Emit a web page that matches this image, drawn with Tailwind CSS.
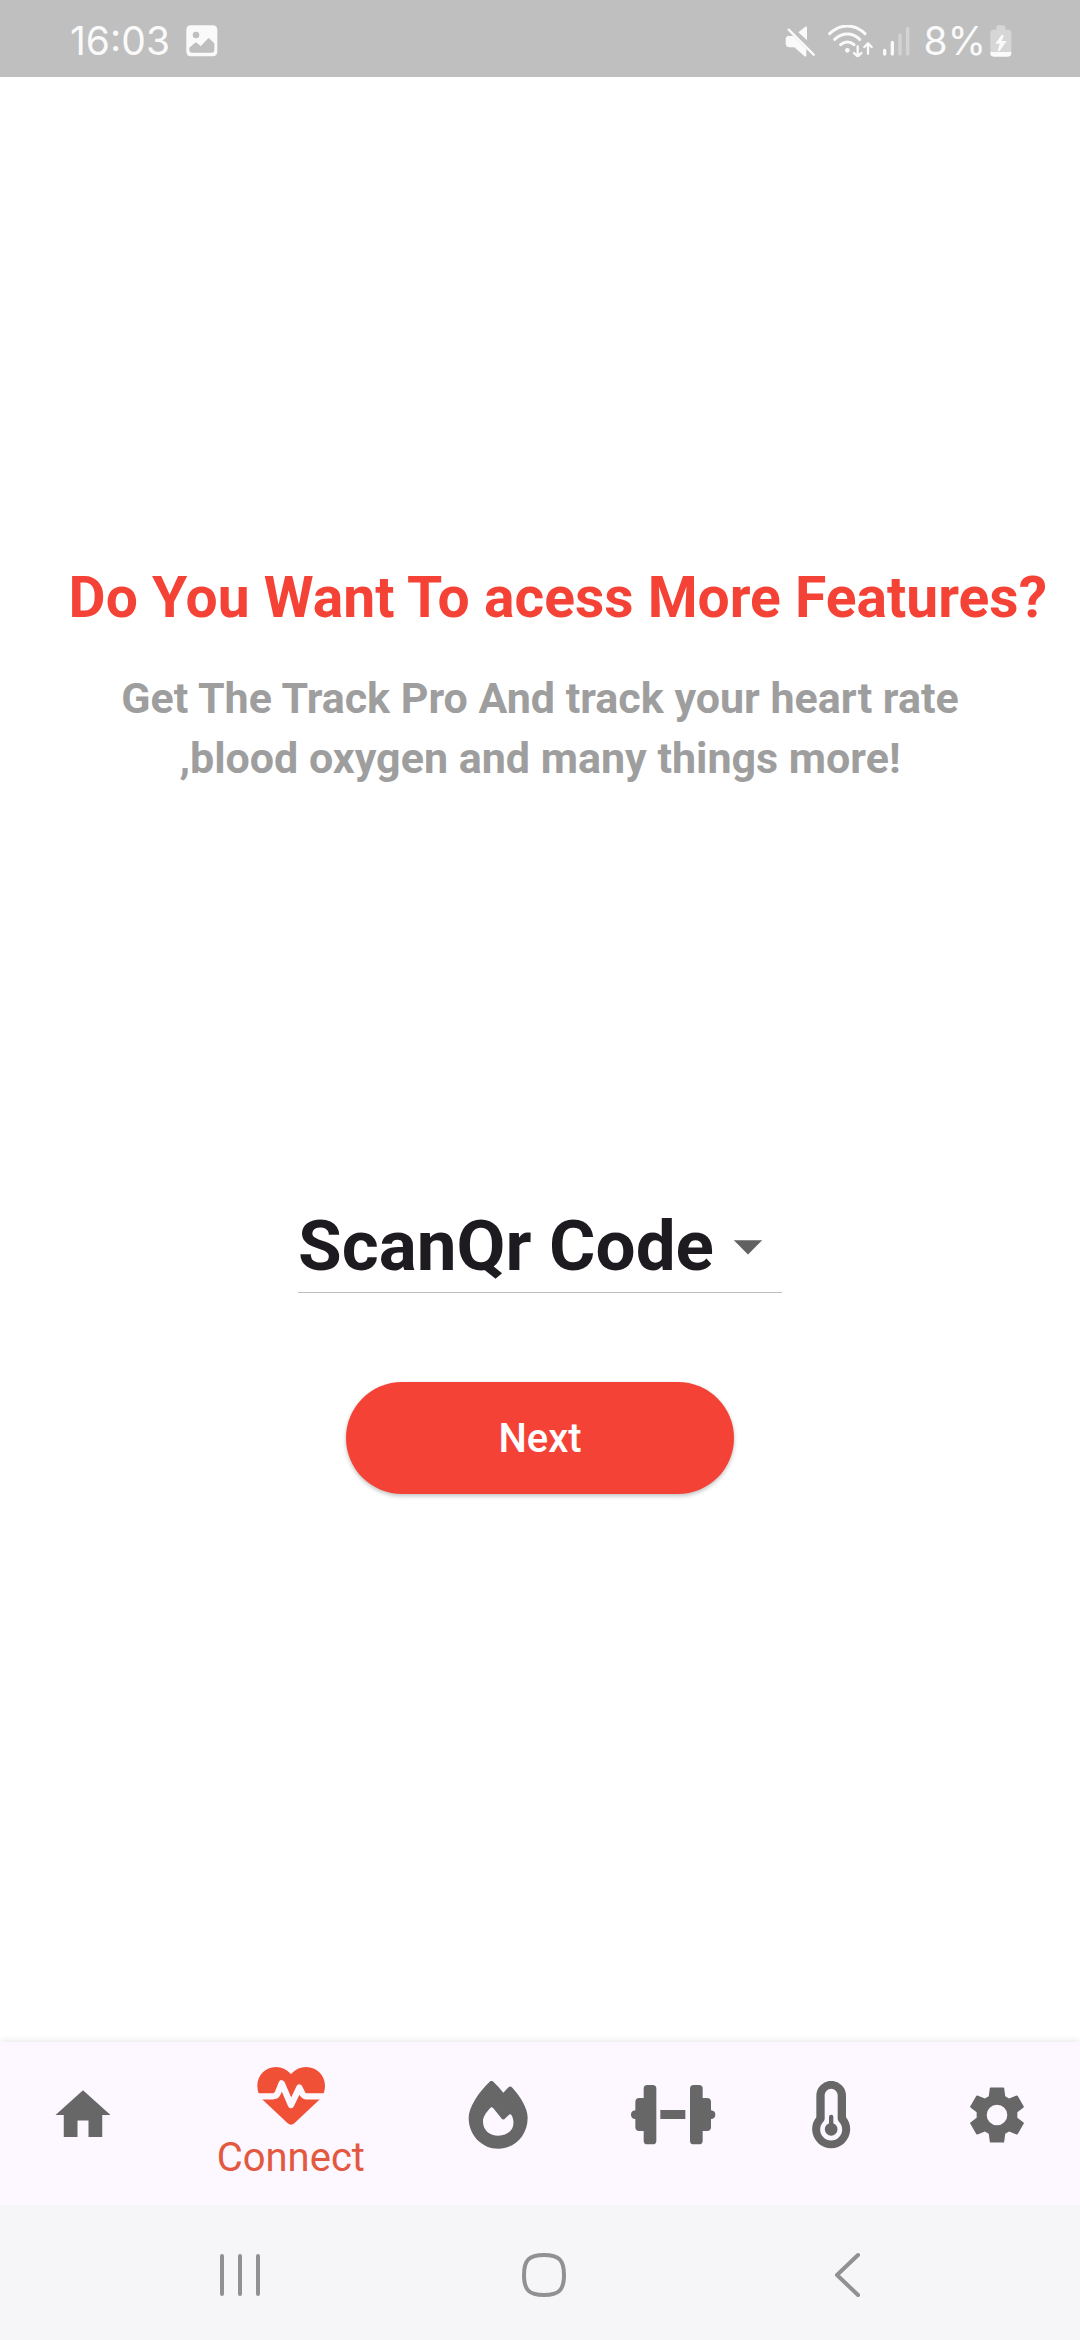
<!DOCTYPE html>
<html lang="en">
<head>
<meta charset="utf-8">
<meta name="viewport" content="width=device-width, initial-scale=1">
<title>Connect</title>
<script src="https://cdn.jsdelivr.net/npm/@tailwindcss/browser@4"></script>
</head>
<body class="flex min-h-screen flex-col bg-white font-['Roboto',sans-serif]">

<header class="flex h-[77px] items-center justify-between bg-[#bfbfbf] pt-1 pr-[68px] pl-[70px] font-['Inter',sans-serif] text-[39px] leading-[48px] text-[#fafafa]">
  <div class="flex items-center gap-4">
    <span>16:03</span>
    <svg class="h-8 w-8" viewBox="0 0 96 96" aria-hidden="true">
      <path fill="currentColor" fill-rule="evenodd" d="M14 1H80Q94 1 94 15V79Q94 94 80 94H14Q1 94 1 79V15Q1 1 14 1ZM30 20A10 10 0 1 0 30 40A10 10 0 1 0 30 20ZM10 68V76Q10 83 17 83H78Q85 83 85 76V55L71 41Q68 38 65 41L44 64L34 55Q30 51 26 54Z"/>
    </svg>
  </div>
  <div class="flex items-center">
    <svg class="h-8 w-[30px]" viewBox="70 76 90 96" aria-hidden="true">
      <path fill="currentColor" d="M80 109H95L134 148V169Q132 172 128 169L103 147Q100 143 95 143H84Q72 143 72 131V120Q72 109 80 109ZM110 98L131 81Q136 79 136 84V122Z"/>
      <path d="M81 90L156 165" stroke="currentColor" stroke-width="7" stroke-linecap="round"/>
    </svg>
    <svg class="ml-[13px] h-8 w-[46px]" viewBox="202 76 138 96" fill="none" stroke="currentColor" stroke-linecap="round" stroke-width="9" aria-hidden="true">
      <path d="M207 102Q231 79 260 79T313 102M222 119Q239 103 260 103T297 119M240 135Q249 127 260 127T280 135"/>
      <circle cx="260" cy="152" r="7" fill="currentColor" stroke="none"/>
      <path stroke-width="7" stroke-linejoin="round" d="M291 140V170M280 160L291 171L302 160M322 162V132M311 142L322 131L333 142"/>
    </svg>
    <svg class="ml-2 h-8 w-7" viewBox="364 76 84 96" fill="none" stroke="currentColor" stroke-linecap="round" stroke-width="10" aria-hidden="true">
      <path d="M372 152V163M395 128V163"/>
      <path stroke-opacity=".35" d="M418 106V163M441 86V163"/>
    </svg>
    <span class="ml-[14px]">8%</span>
    <svg class="ml-1 h-8 w-[22px]" viewBox="689 75 66 96" aria-hidden="true">
      <path fill="currentColor" fill-opacity=".4" d="M708 82Q708 76 714 76H729Q735 76 735 82V89H743Q753 89 753 99V156H690V99Q690 89 700 89H708Z"/>
      <path fill="currentColor" d="M690 156H753V160Q753 170 743 170H700Q690 170 690 160ZM724 104L705 131H718L712 153H718L739 123H724L731 106Z"/>
    </svg>
  </div>
</header>

<main class="flex flex-1 flex-col items-center bg-white pt-[481px]">
  <h1 class="self-end pr-[33px] text-[57px] leading-[80px] font-bold whitespace-nowrap text-[#f44336]">Do You Want To acess More Features?</h1>
  <p class="mt-[30px] text-center text-[43px] leading-[60px] font-bold text-[#9e9e9e]">Get The Track Pro And track your heart rate<br>,blood oxygen and many things more!</p>

  <div class="relative mt-[412px] w-[484px] border-b border-[#bdbdbd]">
    <select aria-label="Connection method" class="block h-[92px] w-full appearance-none bg-transparent text-[71px] leading-[92px] font-bold text-[#1d1b20]">
      <option>ScanQr Code</option>
    </select>
    <svg class="pointer-events-none absolute top-3 right-0 h-[68px] w-[68px]" viewBox="0 0 24 24" fill="#616161" aria-hidden="true"><path d="M7 10l5 5 5-5z"/></svg>
  </div>

  <button type="button" class="mt-[89px] h-[112px] w-[388px] rounded-full bg-[#f44336] pt-[2px] text-[40px] leading-[56px] font-medium text-white shadow-[0_2px_4px_rgba(0,0,0,0.25)]">Next</button>
</main>

<nav class="flex items-start bg-[#fdf7ff] pb-[23px] text-[#676767] shadow-[0_-2px_6px_rgba(0,0,0,0.08)]" aria-label="Main">
  <a href="#home" aria-label="Home" class="flex flex-[2] justify-center pt-10">
    <svg class="h-[66px] w-[66px]" viewBox="0 0 24 24" fill="currentColor"><path d="M10 20v-6h4v6h5v-8h3L12 3 2 12h3v8z"/></svg>
  </a>
  <a href="#connect" aria-current="page" class="flex flex-[3] flex-col items-center gap-1 pt-5 text-[#e2593f]">
    <svg class="h-[68px] w-[68px]" viewBox="770 127 204 204" fill="none" aria-hidden="true">
      <path fill="#f05035" d="M872 163C859 149 844 142 827 142C795 142 771 168 771 198C771 216 777 230 787 240L862 311Q872 319 882 311L957 240C967 230 974 216 974 198C974 168 950 142 917 142C900 142 885 149 872 163Z"/>
      <path stroke="#fdf7ff" stroke-width="19" stroke-linejoin="round" d="M768 230H818Q828 230 832 221L844 191L872 256L897 204L906 222Q911 230 918 230H978"/>
    </svg>
    <span class="text-[40px] leading-[48px]">Connect</span>
  </a>
  <a href="#calories" aria-label="Calories" class="flex flex-[2] justify-center pt-[39px]">
    <svg class="h-[68px] w-[68px]" viewBox="193 183 204 204" fill="currentColor"><path fill-rule="evenodd" d="M270 185Q275 180 281 185Q297 200 311 218L325 203Q332 196 338 203C362 229 384 265 384 293C384 346 345 386 296 386S207 346 207 293C207 262 236 217 270 185ZM271 265Q276 259 281 265L305 295Q311 302 317 295L325 287Q333 278 337 288C351 321 330 347 296 347C270 347 250 330 250 305C250 291 258 279 271 265Z"/></svg>
  </a>
  <a href="#workout" aria-label="Workout" class="flex flex-[2] justify-center pt-[39px]">
    <svg class="h-[68px] w-[68px] overflow-visible" viewBox="692 183 204 204" fill="currentColor">
      <rect x="730" y="195" width="38" height="178" rx="11"/><rect x="869" y="195" width="38" height="178" rx="11"/>
      <path d="M735 234H717Q705 234 705 246V271Q692 272 692 284T705 297V322Q705 333 717 333H735ZM902 234H920Q932 234 932 246V271Q945 272 945 284T932 297V322Q932 333 920 333H902ZM780 270H855V297H780Z"/>
    </svg>
  </a>
  <a href="#temperature" aria-label="Temperature" class="flex flex-[2] justify-center pt-[39px]">
    <svg class="h-[68px] w-[68px]" viewBox="170 183 204 204" fill="currentColor">
      <path fill-rule="evenodd" d="M228 227A44.500 44.500 0 0 1 317 227V292A57 57 0 1 1 228 292ZM253 226V296Q253 300 249 305A33 33 0 1 0 296 305Q292 300 292 296V226A19.500 19.500 0 0 0 253 226Z"/>
      <circle cx="272.500" cy="328" r="19"/><rect x="266" y="284" width="13" height="40" rx="6"/>
    </svg>
  </a>
  <a href="#settings" aria-label="Settings" class="flex flex-[2] justify-center pt-10">
    <svg class="h-[66px] w-[66px]" viewBox="0 0 24 24" fill="currentColor"><path fill-rule="evenodd" d="M9.400 2.200Q9.450 2 9.700 2H14.300Q14.550 2 14.600 2.200L15 5.200L16.400 6L19.100 4.900Q19.400 4.800 19.550 5.050L21.700 8.800Q21.850 9.050 21.650 9.250L19.400 11V13L21.650 14.750Q21.850 14.950 21.700 15.200L19.550 18.950Q19.400 19.200 19.100 19.100L16.400 18L15 18.800L14.600 21.800Q14.550 22 14.300 22H9.700Q9.450 22 9.400 21.800L9 18.800L7.600 18L4.900 19.100Q4.600 19.200 4.450 18.950L2.300 15.200Q2.150 14.950 2.350 14.750L4.600 13V11L2.350 9.250Q2.150 9.050 2.300 8.800L4.450 5.050Q4.600 4.800 4.900 4.900L7.600 6L9 5.200ZM12 8.250A3.750 3.750 0 1 0 12 15.750A3.750 3.750 0 1 0 12 8.250Z"/></svg>
  </a>
</nav>

<footer class="grid h-[135px] grid-cols-3 bg-[#f6f6f8] pt-1 pr-20 pl-[88px] text-[#919191]">
  <button type="button" aria-label="Recent apps" class="flex items-center justify-center">
    <svg class="h-12 w-12" viewBox="0 0 48 48" fill="none" stroke="currentColor" stroke-width="4" stroke-linecap="round"><path d="M6 5V43M24 5V43M42 5V43"/></svg>
  </button>
  <button type="button" aria-label="Home screen" class="flex items-center justify-center">
    <svg class="h-12 w-12" viewBox="0 0 48 48" fill="none" stroke="currentColor" stroke-width="4"><path d="M24 4C39 4 44 9 44 24S39 44 24 44S4 39 4 24S9 4 24 4Z"/></svg>
  </button>
  <button type="button" aria-label="Back" class="flex items-center justify-center">
    <svg class="h-12 w-12" viewBox="0 0 48 48" fill="none" stroke="currentColor" stroke-width="4" stroke-linecap="round" stroke-linejoin="round"><path d="M34 4L13 24L34 44"/></svg>
  </button>
</footer>
</body>
</html>
